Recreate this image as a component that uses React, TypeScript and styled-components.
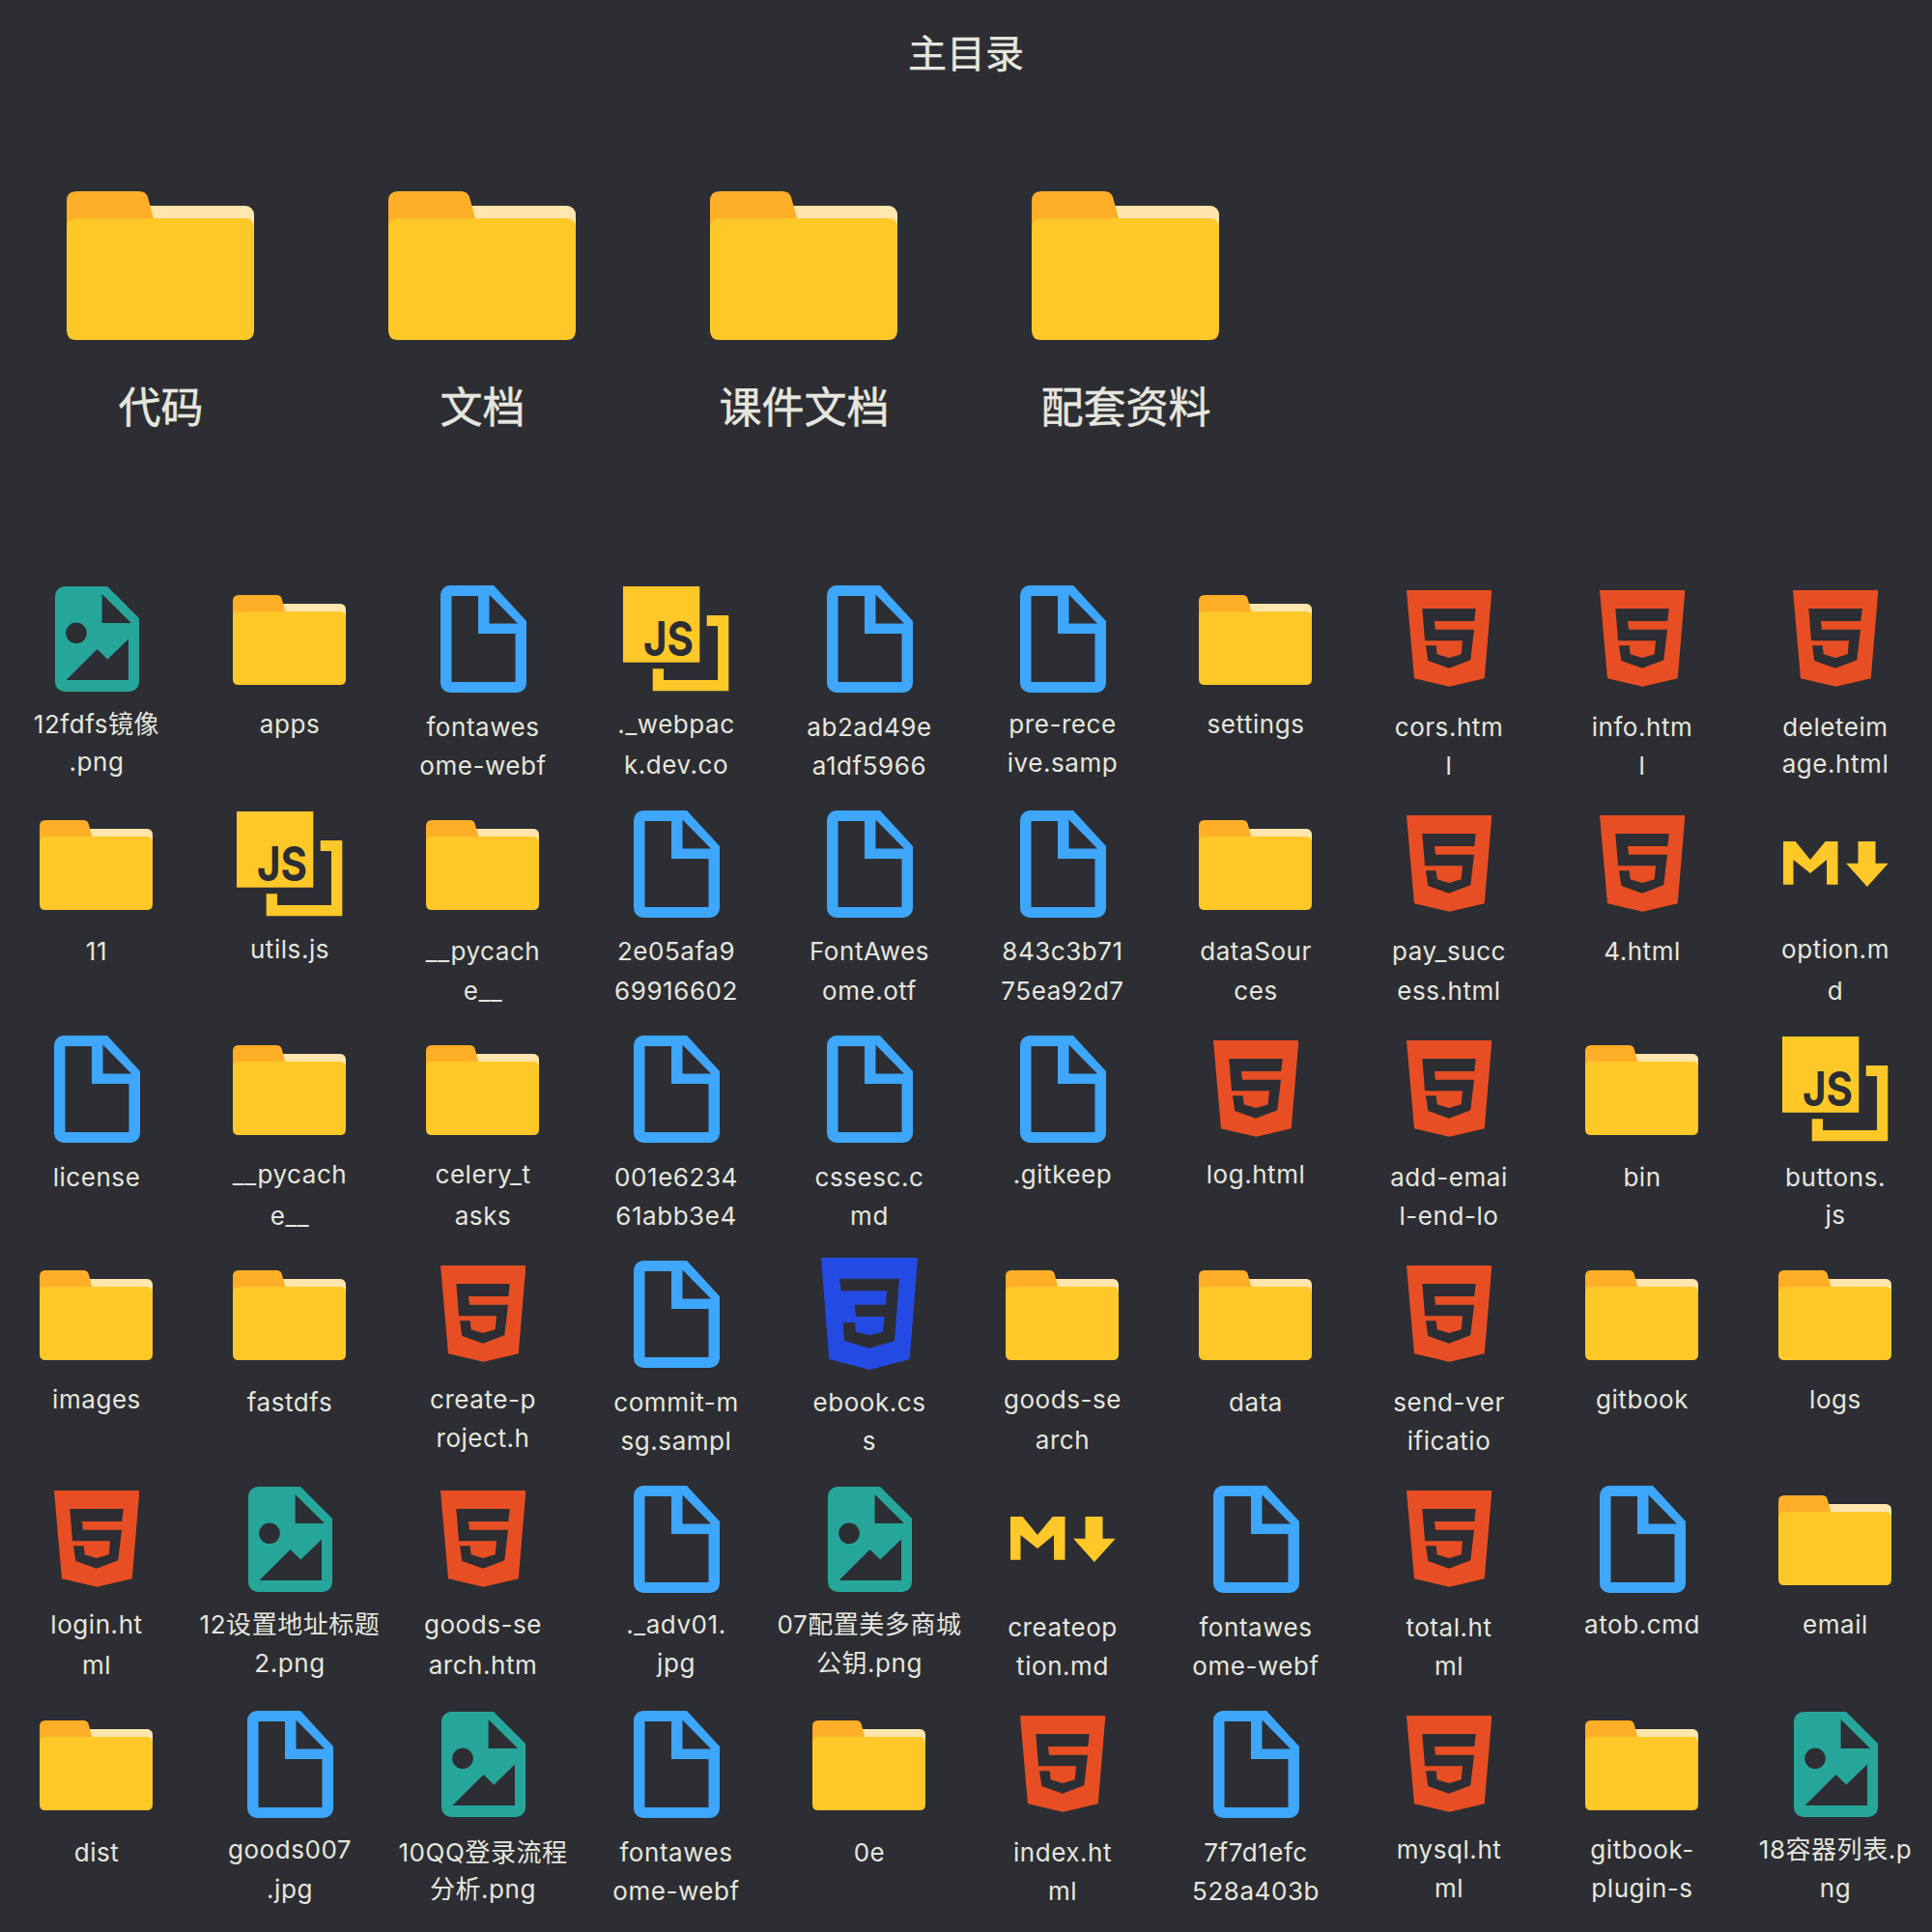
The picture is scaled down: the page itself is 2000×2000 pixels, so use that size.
import React from "react";
import styled, { createGlobalStyle } from "styled-components";

const Global = createGlobalStyle`
  html, body { margin: 0; padding: 0; background: #2c2e33; }
  body { font-family: Inter, "Noto Sans CJK SC", sans-serif; color: #e6e6de; }
`;

const Page = styled.main`
  width: 2000px;
  height: 2000px;
  overflow: hidden;
  background: #2c2e33;
`;

const Title = styled.h1`
  margin: 0;
  height: 105px;
  display: flex;
  align-items: center;
  justify-content: center;
  font: 400 40px/1 "Noto Sans CJK SC", sans-serif;
  -webkit-text-stroke: 0.4px #e6e6de;
  color: #e6e6de;
`;

const Featured = styled.section`
  display: grid;
  grid-template-columns: repeat(4, 333px);
  padding-top: 93px;
`;

const FeaturedItem = styled.div`
  display: flex;
  flex-direction: column;
  align-items: center;
`;

const FeaturedLabel = styled.div`
  margin-top: 37px;
  margin-bottom: 2px;
  font: 400 44px/60px "Noto Sans CJK SC", sans-serif;
  -webkit-text-stroke: 0.5px #e6e6de;
  color: #e6e6de;
`;

const FileGrid = styled.section`
  display: grid;
  grid-template-columns: repeat(10, 200px);
  grid-auto-rows: 233px;
  margin-top: 145px;
`;

const Cell = styled.div`
  display: flex;
  flex-direction: column;
  align-items: center;
  min-width: 0;
`;

const IconBox = styled.div`
  height: 130px;
  flex: none;
  display: flex;
  align-items: center;
  justify-content: center;
`;

const Label = styled.div<{ $lift: number }>`
  margin-top: ${(p) => 7 - p.$lift}px;
  font-size: 26px;
  line-height: 40px;
  font-weight: 400;
  text-align: center;
  white-space: nowrap;
  letter-spacing: 0.55px;
`;

const SecondLine = styled.div<{ $gap: number }>`
  margin-top: ${(p) => p.$gap}px;
`;

const FolderSvg = styled.svg`
  display: block;
  margin-right: 2px;
`;

const SmallFolderSvg = styled(FolderSvg)`
  margin-top: 3px;
`;

const FolderArt = () => (
  <>
    <rect x="70" y="15" width="124" height="60" rx="9" fill="#ffe6ac" />
    <path d="M10 0H75Q82 0 84 6L90 28V80H0V10Q0 0 10 0Z" fill="#ffae27" />
    <path d="M0 38Q0 28 10 28H184Q194 28 194 38V144Q194 154 184 154H10Q0 154 0 144Z" fill="#ffc829" />
  </>
);

const FolderIcon = () => (
  <SmallFolderSvg width="117" height="93" viewBox="0 0 194 154">
    <FolderArt />
  </SmallFolderSvg>
);

const BigFolderIcon = () => (
  <FolderSvg width="194" height="154" viewBox="0 0 194 154">
    <FolderArt />
  </FolderSvg>
);

const FileIcon = () => (
  <svg width="89" height="111" viewBox="0 0 89 111">
    <path
      fillRule="evenodd"
      fill="#3ea6fb"
      d="M10 0H55L89 37V101A10 10 0 0 1 79 111H10A10 10 0 0 1 0 101V10A10 10 0 0 1 10 0ZM11.500 11V100H77.500V50H39V11ZM50.500 9.500V39.500H80Z"
    />
  </svg>
);

const ImageIcon = () => (
  <svg width="87" height="109" viewBox="0 0 87 109">
    <path
      fillRule="evenodd"
      fill="#26a69a"
      d="M10 0H54L87 33V99A10 10 0 0 1 77 109H10A10 10 0 0 1 0 99V10A10 10 0 0 1 10 0ZM48.600 8V38H79ZM22 37.500A10.800 10.800 0 1 0 22 59.100A10.800 10.800 0 1 0 22 37.500ZM11.500 97H76V54.500L54.300 75.500L43.600 65Z"
    />
  </svg>
);

const JsIcon = () => (
  <svg width="110" height="109" viewBox="0 0 110 109">
    <rect width="79.300" height="78.700" fill="#ffc829" />
    <path
      fill="#ffc829"
      d="M86.700 30H109.300V108.300H30.700V85.300H42V97H98V41H86.700Z"
    />
    <text
      x="21"
      y="72"
      fontFamily="Inter, sans-serif"
      fontWeight="700"
      fontSize="50"
      textLength="52"
      lengthAdjust="spacingAndGlyphs"
      fill="#2c2e33"
    >
      JS
    </text>
  </svg>
);

const HtmlIcon = () => (
  <svg width="88.400" height="100" viewBox="0 0 88.400 100">
    <path
      fillRule="evenodd"
      fill="#e84e24"
      d="M0 0H88.400L80.700 91.300L44.400 99.700L8 91.300ZM16.300 19L19 52.300H58L56.700 66.300L44 70L31.700 66.300L30.700 57.300H20L22.300 73L44 80.700L66.300 72.300L70 40.700H30L29 32H70.300L71.700 19Z"
    />
  </svg>
);

const CssIcon = () => (
  <svg width="100" height="116" viewBox="0 0 100 116">
    <path
      fillRule="evenodd"
      fill="#234be4"
      d="M0 0H100L91.700 105L50 116L8.300 105ZM19 21.700L20.700 34.300H68L67 48.700H34.700L36 61H65.700L64 76.700L50 80.300L36 76.700L35 67H22.700L24 86L50 93.700L76 86L81 21.700Z"
    />
  </svg>
);

const MdIcon = () => (
  <svg width="109" height="47" viewBox="0 0 109 47">
    <path
      fill="#ffc829"
      d="M0 0H12.600L28 19L43.700 0H56.500V44.700H45V19L28 33L10.500 19V44.700H0ZM77.500 0H95.500V22.700H108.700L86.900 47L65.100 22.700H77.500Z"
    />
  </svg>
);

const icons = {
  folder: <FolderIcon />,
  file: <FileIcon />,
  image: <ImageIcon />,
  js: <JsIcon />,
  html: <HtmlIcon />,
  css: <CssIcon />,
  md: <MdIcon />,
};

type Item = {
  kind: keyof typeof icons;
  lines: [string, string?];
  lift?: number;
  gap?: number;
};

const it = (
  kind: Item["kind"],
  a: string,
  b?: string,
  lift = 0,
  gap = 0
): Item => ({ kind, lines: [a, b], lift, gap });

const items: Item[] = [
  it("image", "12fdfs镜像", ".png", 3, -1),
  it("folder", "apps", undefined, 3),
  it("file", "fontawes", "ome-webf"),
  it("js", "._webpac", "k.dev.co", 3, 2),
  it("file", "ab2ad49e", "a1df5966"),
  it("file", "pre-rece", "ive.samp", 3, 0),
  it("folder", "settings", undefined, 3),
  it("html", "cors.htm", "l"),
  it("html", "info.htm", "l"),
  it("html", "deleteim", "age.html", 0, -2),

  it("folder", "11", undefined, 1),
  it("js", "utils.js", undefined, 3),
  it("folder", "__pycach", "e__", 1, 1),
  it("file", "2e05afa9", "69916602", 1, 1),
  it("file", "FontAwes", "ome.otf", 1, 1),
  it("file", "843c3b71", "75ea92d7", 1, 1),
  it("folder", "dataSour", "ces", 1, 1),
  it("html", "pay_succ", "ess.html", 1, 1),
  it("html", "4.html", undefined, 1),
  it("md", "option.m", "d", 3, 3),

  it("file", "license"),
  it("folder", "__pycach", "e__", 3, 3),
  it("folder", "celery_t", "asks", 3, 3),
  it("file", "001e6234", "61abb3e4"),
  it("file", "cssesc.c", "md"),
  it("file", ".gitkeep", undefined, 3),
  it("html", "log.html", undefined, 3),
  it("html", "add-emai", "l-end-lo"),
  it("folder", "bin"),
  it("js", "buttons.", "js", 0, -1),

  it("folder", "images", undefined, 3),
  it("folder", "fastdfs"),
  it("html", "create-p", "roject.h", 3),
  it("file", "commit-m", "sg.sampl"),
  it("css", "ebook.cs", "s"),
  it("folder", "goods-se", "arch", 3, 2),
  it("folder", "data"),
  it("html", "send-ver", "ificatio"),
  it("folder", "gitbook", undefined, 3),
  it("folder", "logs", undefined, 3),

  it("html", "login.ht", "ml", 3, 2),
  it("image", "12设置地址标题", "2.png", 3, 0),
  it("html", "goods-se", "arch.htm", 3, 2),
  it("file", "._adv01.", "jpg", 3, 0),
  it("image", "07配置美多商城", "公钥.png", 3, 0),
  it("md", "createop", "tion.md"),
  it("file", "fontawes", "ome-webf"),
  it("html", "total.ht", "ml"),
  it("file", "atob.cmd", undefined, 3),
  it("folder", "email", undefined, 3),

  it("folder", "dist"),
  it("file", "goods007", ".jpg", 3, 1),
  it("image", "10QQ登录流程", "分析.png", 0, -2),
  it("file", "fontawes", "ome-webf"),
  it("folder", "0e"),
  it("html", "index.ht", "ml"),
  it("file", "7f7d1efc", "528a403b"),
  it("html", "mysql.ht", "ml", 3, 0),
  it("folder", "gitbook-", "plugin-s", 3, 0),
  it("image", "18容器列表.p", "ng", 3, 0),
];

const featured = ["代码", "文档", "课件文档", "配套资料"];

export default function App() {
  return (
    <Page>
      <Global />
      <Title>主目录</Title>
      <Featured>
        {featured.map((name) => (
          <FeaturedItem key={name}>
            <BigFolderIcon />
            <FeaturedLabel>{name}</FeaturedLabel>
          </FeaturedItem>
        ))}
      </Featured>
      <FileGrid>
        {items.map((item, i) => (
          <Cell key={i}>
            <IconBox>{icons[item.kind]}</IconBox>
            <Label $lift={item.lift ?? 0}>
              <div>{item.lines[0]}</div>
              {item.lines[1] && (
                <SecondLine $gap={item.gap ?? 0}>{item.lines[1]}</SecondLine>
              )}
            </Label>
          </Cell>
        ))}
      </FileGrid>
    </Page>
  );
}
